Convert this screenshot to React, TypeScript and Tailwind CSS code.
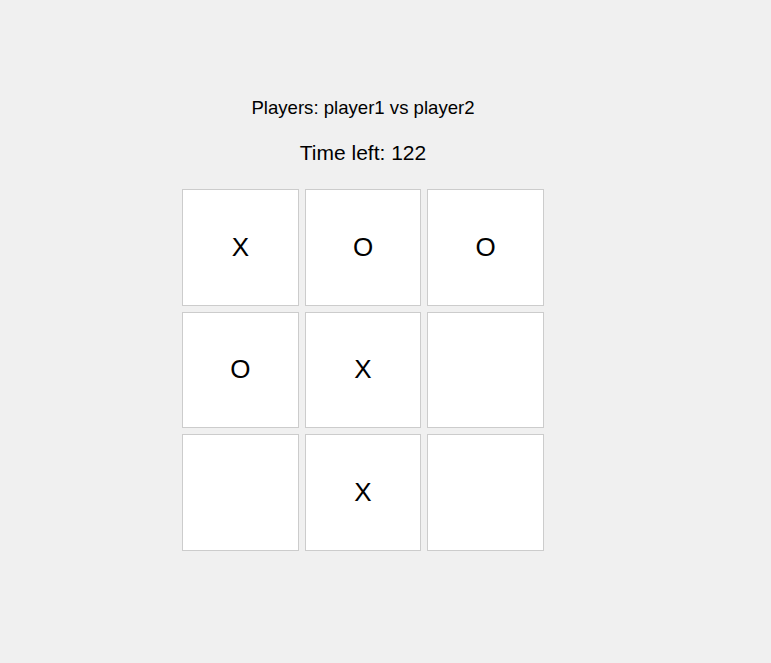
const board: string[] = ['X', 'O', 'O', 'O', 'X', '', '', 'X', '']

export default function App() {
  return (
    <div className="min-h-[663px] w-full bg-[#f0f0f0] font-['Liberation_Sans',Arial,sans-serif] text-black">
      <div className="w-[726px] flex flex-col items-center pt-[97px]">
        <p className="text-[18.6px] leading-[21px]">Players: player1 vs player2</p>
        <p className="mt-[23px] text-[21px] leading-[24px]">Time left: 122</p>
        <div className="mt-[24px] grid w-[362px] grid-cols-3 gap-[6px]">
          {board.map((cell, i) => (
            <div
              key={i}
              className="flex h-[116.67px] items-center justify-center border border-[#cccccc] bg-white text-[26px]"
            >
              {cell}
            </div>
          ))}
        </div>
      </div>
    </div>
  )
}
